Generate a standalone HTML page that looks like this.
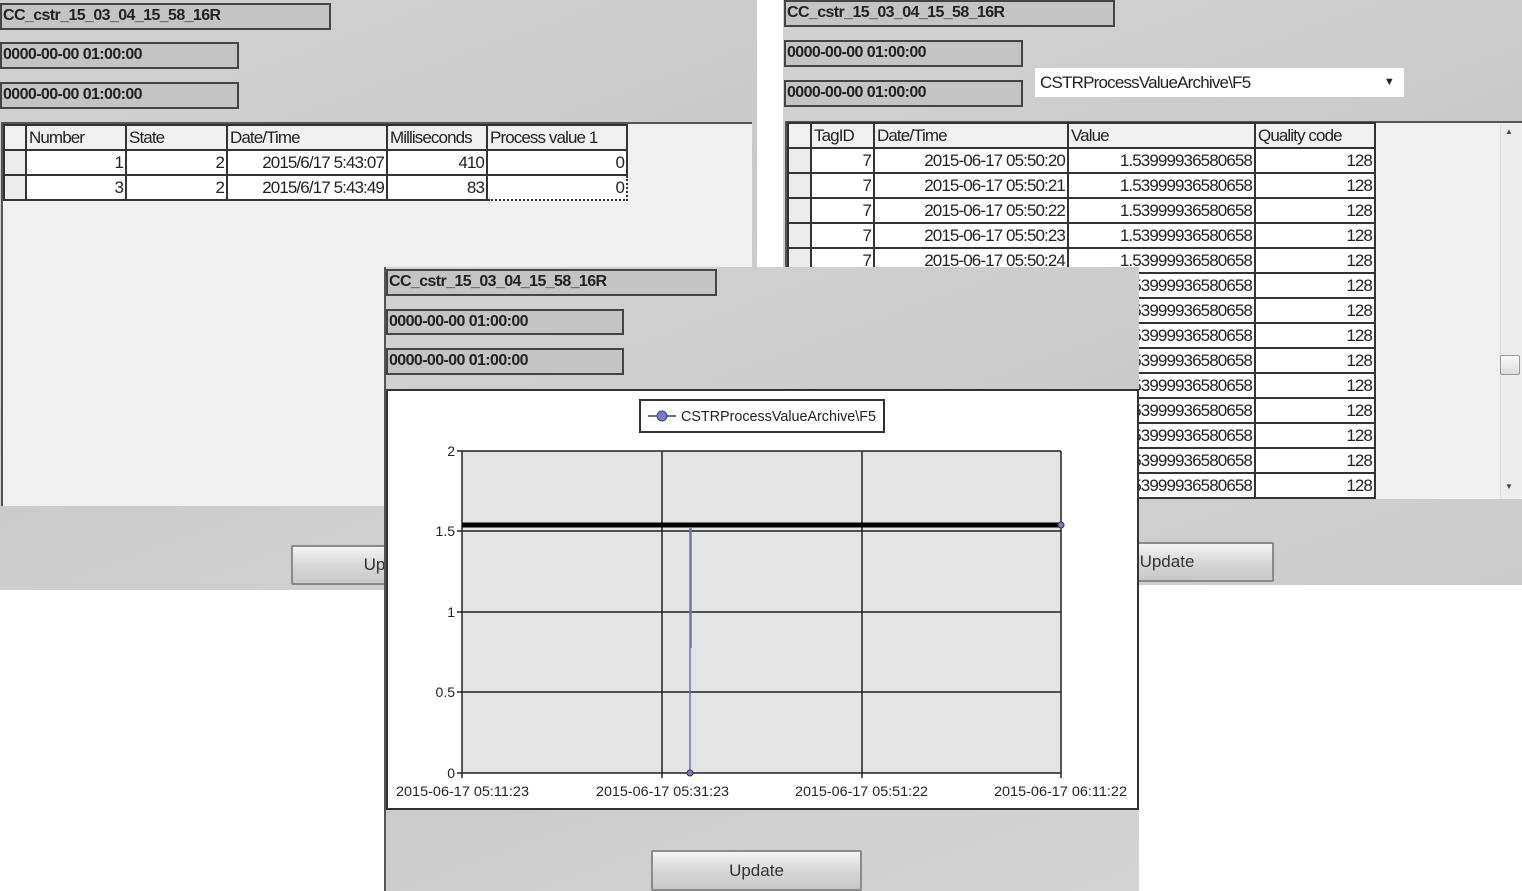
<!DOCTYPE html>
<html><head><meta charset="utf-8"><style>
*{margin:0;padding:0;box-sizing:border-box}
body{width:1522px;height:891px;position:relative;overflow:hidden;background:#fff;font-family:"Liberation Sans",sans-serif;color:#222}
.abs{position:absolute}
.panel{background:linear-gradient(160deg,#d2d2d2,#c9c9c9 50%,#d4d4d4)}
.fld{position:absolute;background:#c4c4c4;border:2px solid #444;font-weight:bold;font-size:16px;line-height:21px;padding-left:1px;white-space:nowrap;overflow:hidden;letter-spacing:-0.6px}
.btn{position:absolute;background:linear-gradient(#f4f4f4,#d8d8d8 50%,#c8c8c8);border:2px solid #8a8a8a;border-radius:2px;font-size:17px;text-align:center;color:#333}
table{border-collapse:collapse;table-layout:fixed;position:absolute;font-size:17px;letter-spacing:-0.9px}
td{border:2px solid #333;height:25px;padding:0 2px;white-space:nowrap;overflow:hidden;background:#fff;line-height:20px;text-align:right}
tr.h td{background:#f0f0f0;text-align:left}
td.rh{background:#ececec}
</style></head><body>

<div class="abs panel" style="left:0;top:0;width:757px;height:590px"></div>
<div class="fld" style="left:0;top:3px;width:331px;height:27px">CC_cstr_15_03_04_15_58_16R</div>
<div class="fld" style="left:0;top:42px;width:239px;height:27px">0000-00-00 01:00:00</div>
<div class="fld" style="left:0;top:82px;width:239px;height:27px">0000-00-00 01:00:00</div>
<div class="abs" style="left:1px;top:122px;width:751px;height:384px;background:#f0f0f0;border-top:2px solid #555;border-left:2px solid #555"></div>
<table style="left:3px;top:124px;width:623px">
<colgroup><col style="width:22px"><col style="width:100px"><col style="width:101px"><col style="width:160px"><col style="width:100px"><col style="width:140px"></colgroup>
<tr class="h"><td class="rh"></td><td>Number</td><td>State</td><td>Date/Time</td><td>Milliseconds</td><td>Process value 1</td></tr>
<tr><td class="rh"></td><td>1</td><td>2</td><td>2015/6/17 5:43:07</td><td>410</td><td>0</td></tr>
<tr><td class="rh"></td><td>3</td><td>2</td><td>2015/6/17 5:43:49</td><td>83</td><td style="border-style:dotted">0</td></tr>
</table>
<div class="btn" style="left:291px;top:545px;width:200px;height:40px;line-height:36px">Update</div>

<div class="abs panel" style="left:783px;top:0;width:739px;height:585px"></div>
<div class="fld" style="left:784px;top:0;width:331px;height:27px">CC_cstr_15_03_04_15_58_16R</div>
<div class="fld" style="left:784px;top:40px;width:239px;height:27px">0000-00-00 01:00:00</div>
<div class="fld" style="left:784px;top:80px;width:239px;height:27px">0000-00-00 01:00:00</div>
<div class="abs" style="left:1035px;top:68px;width:369px;height:29px;background:#fff;font-size:17px;letter-spacing:-0.8px;line-height:29px;padding-left:5px">CSTRProcessValueArchive\F5<span style="position:absolute;right:10px;top:0;font-size:11px">&#9660;</span></div>
<div class="abs" style="left:785px;top:121px;width:737px;height:380px;background:#f0f0f0;border-top:2px solid #555;border-left:2px solid #555"></div>
<div class="abs" style="left:1500px;top:123px;width:21px;height:377px;background:#ececec;border-left:1px solid #ddd"></div>
<div class="abs" style="left:1505px;top:127px;font-size:8px;color:#444">&#9650;</div>
<div class="abs" style="left:1505px;top:482px;font-size:8px;color:#444">&#9660;</div>
<div class="abs" style="left:1500px;top:355px;width:20px;height:20px;background:linear-gradient(#fafafa,#ddd);border:1px solid #999;border-radius:2px"></div>
<table style="left:787px;top:122px;width:587px">
<colgroup><col style="width:23px"><col style="width:63px"><col style="width:194px"><col style="width:187px"><col style="width:120px"></colgroup>
<tr class="h"><td class="rh"></td><td>TagID</td><td>Date/Time</td><td>Value</td><td>Quality code</td></tr>
<tr><td class="rh"></td><td>7</td><td>2015-06-17 05:50:20</td><td>1.53999936580658</td><td>128</td></tr>
<tr><td class="rh"></td><td>7</td><td>2015-06-17 05:50:21</td><td>1.53999936580658</td><td>128</td></tr>
<tr><td class="rh"></td><td>7</td><td>2015-06-17 05:50:22</td><td>1.53999936580658</td><td>128</td></tr>
<tr><td class="rh"></td><td>7</td><td>2015-06-17 05:50:23</td><td>1.53999936580658</td><td>128</td></tr>
<tr><td class="rh"></td><td>7</td><td>2015-06-17 05:50:24</td><td>1.53999936580658</td><td>128</td></tr>
<tr><td class="rh"></td><td>7</td><td>2015-06-17 05:50:25</td><td>1.53999936580658</td><td>128</td></tr>
<tr><td class="rh"></td><td>7</td><td>2015-06-17 05:50:26</td><td>1.53999936580658</td><td>128</td></tr>
<tr><td class="rh"></td><td>7</td><td>2015-06-17 05:50:27</td><td>1.53999936580658</td><td>128</td></tr>
<tr><td class="rh"></td><td>7</td><td>2015-06-17 05:50:28</td><td>1.53999936580658</td><td>128</td></tr>
<tr><td class="rh"></td><td>7</td><td>2015-06-17 05:50:29</td><td>1.53999936580658</td><td>128</td></tr>
<tr><td class="rh"></td><td>7</td><td>2015-06-17 05:50:30</td><td>1.53999936580658</td><td>128</td></tr>
<tr><td class="rh"></td><td>7</td><td>2015-06-17 05:50:31</td><td>1.53999936580658</td><td>128</td></tr>
<tr><td class="rh"></td><td>7</td><td>2015-06-17 05:50:32</td><td>1.53999936580658</td><td>128</td></tr>
<tr><td class="rh"></td><td>7</td><td>2015-06-17 05:50:33</td><td>1.53999936580658</td><td>128</td></tr>
</table>
<div class="abs" style="left:785px;top:499px;width:737px;height:86px;background:linear-gradient(160deg,#d2d2d2,#cbcbcb)"></div>
<div class="btn" style="left:1060px;top:542px;width:214px;height:40px;line-height:36px">Update</div>

<div class="abs panel" style="left:384px;top:267px;width:755px;height:624px;border-left:2px solid #555"></div>
<div class="fld" style="left:386px;top:269px;width:331px;height:27px">CC_cstr_15_03_04_15_58_16R</div>
<div class="fld" style="left:386px;top:309px;width:238px;height:26px">0000-00-00 01:00:00</div>
<div class="fld" style="left:386px;top:348px;width:238px;height:27px">0000-00-00 01:00:00</div>
<svg class="abs" style="left:386px;top:389px" width="753" height="421" viewBox="386 389 753 421">
<rect x="387" y="390" width="751" height="419" fill="#fff" stroke="#333" stroke-width="2"/>
<rect x="640" y="400" width="244" height="32" fill="#fff" stroke="#333" stroke-width="2"/>
<line x1="648" y1="416" x2="676" y2="416" stroke="#6a6ab0" stroke-width="2"/>
<circle cx="662" cy="416" r="5" fill="#7a7ac8" stroke="#44447a"/>
<text x="681" y="421" font-family="Liberation Sans,sans-serif" font-size="15" fill="#222" textLength="195" lengthAdjust="spacingAndGlyphs">CSTRProcessValueArchive\F5</text>
<rect x="462" y="451" width="599" height="322" fill="#e4e4e4"/>
<g stroke="#222" stroke-width="1.5">
<line x1="462" y1="451" x2="1061" y2="451"/><line x1="462" y1="531" x2="1061" y2="531"/><line x1="462" y1="612" x2="1061" y2="612"/><line x1="462" y1="692" x2="1061" y2="692"/><line x1="462" y1="773" x2="1061" y2="773"/>
<line x1="462" y1="451" x2="462" y2="778"/><line x1="662" y1="451" x2="662" y2="778"/><line x1="862" y1="451" x2="862" y2="778"/><line x1="1061" y1="451" x2="1061" y2="778"/>
<line x1="457" y1="451" x2="462" y2="451"/><line x1="457" y1="531" x2="462" y2="531"/><line x1="457" y1="612" x2="462" y2="612"/><line x1="457" y1="692" x2="462" y2="692"/><line x1="457" y1="773" x2="462" y2="773"/>
</g>
<line x1="462" y1="525" x2="1061" y2="525" stroke="#000" stroke-width="5"/>
<line x1="690" y1="527" x2="690" y2="773" stroke="#7070c0" stroke-width="1.5"/>
<line x1="691" y1="527" x2="691" y2="648" stroke="#7070c0" stroke-width="1.5"/>
<circle cx="690" cy="773" r="3" fill="#7a7ac8" stroke="#333"/>
<circle cx="1061" cy="525" r="3" fill="#7a7ac8" stroke="#333"/>
<g font-family="Liberation Sans,sans-serif" font-size="14" fill="#222">
<text x="455" y="456" text-anchor="end">2</text><text x="455" y="536" text-anchor="end">1.5</text><text x="455" y="617" text-anchor="end">1</text><text x="455" y="697" text-anchor="end">0.5</text><text x="455" y="778" text-anchor="end">0</text>
<text x="396" y="796" textLength="133" lengthAdjust="spacingAndGlyphs">2015-06-17 05:11:23</text><text x="596" y="796" textLength="133" lengthAdjust="spacingAndGlyphs">2015-06-17 05:31:23</text><text x="795" y="796" textLength="133" lengthAdjust="spacingAndGlyphs">2015-06-17 05:51:22</text><text x="994" y="796" textLength="133" lengthAdjust="spacingAndGlyphs">2015-06-17 06:11:22</text>
</g>
</svg>
<div class="btn" style="left:651px;top:850px;width:211px;height:41px;line-height:38px">Update</div>
</body></html>
